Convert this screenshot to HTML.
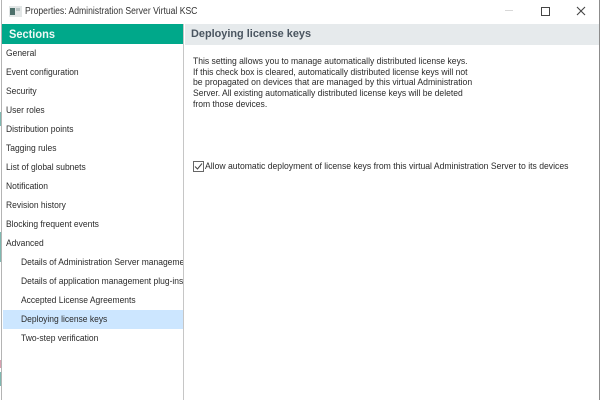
<!DOCTYPE html>
<html>
<head>
<meta charset="utf-8">
<style>
html,body{margin:0;padding:0;background:#fff}
#w{position:relative;width:600px;height:400px;overflow:hidden;background:#fff;font-family:"Liberation Sans",sans-serif;font-size:9.4px;color:#2b2b2b}
.a{position:absolute;white-space:nowrap}
.i{position:absolute;white-space:nowrap;height:19px;line-height:19px;left:6px;margin-top:-1px;transform:scaleX(.905);transform-origin:0 0}
.s{left:21px}
.p{position:absolute;left:193px;white-space:nowrap;line-height:11px;font-size:9.4px;color:#2b2b2b;transform:scaleX(.913);transform-origin:0 0}
</style>
</head>
<body>
<div id="w">
<div class="a" style="left:1px;top:0;width:1px;height:400px;background:#b4b4b4"></div>
<div class="a" style="left:0;top:112px;width:1px;height:14px;background:#7fb8b0"></div>
<div class="a" style="left:0;top:232px;width:1px;height:30px;background:#7fb8b0"></div>
<div class="a" style="left:0;top:360px;width:1px;height:8px;background:#d8a0b0"></div>
<div class="a" style="left:0;top:372px;width:1px;height:14px;background:#7fb8b0"></div>
<div class="a" style="left:599px;top:0;width:1px;height:400px;background:#8c8c8c"></div>

<svg class="a" style="left:9px;top:6px" width="13" height="11" viewBox="0 0 13 11"><rect x="0" y="0" width="13" height="11" fill="#e2e6e6"/><rect x="1" y="2" width="5" height="7" fill="#4c6f6a"/><rect x="7" y="2" width="4" height="3" fill="#b9c4c4"/></svg>
<div class="a" style="left:25px;top:4px;line-height:15px;font-size:10px;color:#333;transform:scaleX(.86);transform-origin:0 0">Properties: Administration Server Virtual KSC</div>

<div class="a" style="left:505px;top:10px;width:8px;height:1px;background:#d8d8d8"></div>
<div class="a" style="left:541px;top:7px;width:7px;height:7px;border:1px solid #444"></div>
<svg class="a" style="left:576px;top:6px" width="10" height="10" viewBox="0 0 10 10"><path d="M1 1L9 9M9 1L1 9" stroke="#444" stroke-width="1.1" fill="none"/></svg>

<div class="a" style="left:2px;top:24px;width:181px;height:20px;background:#00a88a"></div>
<div class="a" style="left:9px;top:24px;line-height:20px;font-size:12.4px;font-weight:bold;color:#eef8f5;transform:scaleX(.89);transform-origin:0 0">Sections</div>
<div class="a" style="left:183px;top:24px;width:1px;height:376px;background:#c6c6c6"></div>
<div class="a" style="left:185px;top:24px;width:414px;height:21px;background:#e6eaec"></div>
<div class="a" style="left:191px;top:24px;line-height:21px;font-size:11.2px;font-weight:bold;color:#4a5560;transform:scaleX(.975);transform-origin:0 0">Deploying license keys</div>

<div class="a" style="left:3px;top:310px;width:180px;height:19px;background:#cce6ff"></div>

<div class="i" style="top:44px">General</div>
<div class="i" style="top:63px">Event configuration</div>
<div class="i" style="top:82px">Security</div>
<div class="i" style="top:101px">User roles</div>
<div class="i" style="top:120px">Distribution points</div>
<div class="i" style="top:139px">Tagging rules</div>
<div class="i" style="top:158px">List of global subnets</div>
<div class="i" style="top:177px">Notification</div>
<div class="i" style="top:196px">Revision history</div>
<div class="i" style="top:215px">Blocking frequent events</div>
<div class="i" style="top:234px">Advanced</div>
<div class="i s" style="top:253px;width:179px;overflow:hidden">Details of Administration Server management</div>
<div class="i s" style="top:272px;width:179px;overflow:hidden">Details of application management plug-ins</div>
<div class="i s" style="top:291px">Accepted License Agreements</div>
<div class="i s" style="top:310px">Deploying license keys</div>
<div class="i s" style="top:329px">Two-step verification</div>

<div class="p" style="top:55px">This setting allows you to manage automatically distributed license keys.</div>
<div class="p" style="top:66px">If this check box is cleared, automatically distributed license keys will not</div>
<div class="p" style="top:76px;transform:scaleX(.922)">be propagated on devices that are managed by this virtual Administration</div>
<div class="p" style="top:87px">Server. All existing automatically distributed license keys will be deleted</div>
<div class="p" style="top:98px">from those devices.</div>

<svg class="a" style="left:193px;top:161px" width="11" height="11" viewBox="0 0 11 11"><rect x="0.5" y="0.5" width="10" height="10" fill="#fff" stroke="#666"/><path d="M2 5.5L4.5 8L9 2.5" stroke="#444" stroke-width="1" fill="none"/></svg>
<div class="a" style="left:205px;top:160px;line-height:12px;font-size:9.4px;color:#2b2b2b;transform:scaleX(.919);transform-origin:0 0">Allow automatic deployment of license keys from this virtual Administration Server to its devices</div>
</div>
</body>
</html>
